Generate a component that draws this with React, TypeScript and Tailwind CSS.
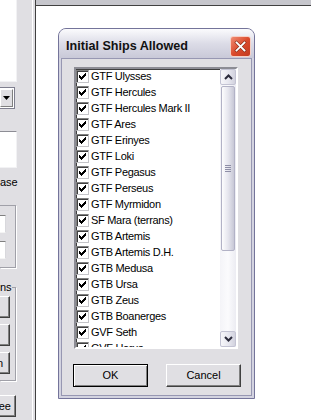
import React from "react";

const items = [
  "GTF Ulysses",
  "GTF Hercules",
  "GTF Hercules Mark II",
  "GTF Ares",
  "GTF Erinyes",
  "GTF Loki",
  "GTF Pegasus",
  "GTF Perseus",
  "GTF Myrmidon",
  "SF Mara (terrans)",
  "GTB Artemis",
  "GTB Artemis D.H.",
  "GTB Medusa",
  "GTB Ursa",
  "GTB Zeus",
  "GTB Boanerges",
  "GVF Seth",
  "GVF Horus",
];

const checkCols: [number, number][] = [
  [3, 5],
  [4, 6],
  [5, 7],
  [6, 6],
  [7, 5],
  [8, 4],
  [9, 3],
];

function CheckBox() {
  return (
    <div className="relative w-[13px] h-[13px] shrink-0 bg-white border border-t-[#808080] border-l-[#808080] border-r-[#c4c4c8] border-b-[#c4c4c8] shadow-[inset_1px_1px_0_#404040]">
      <svg
        width="13"
        height="13"
        viewBox="0 0 13 13"
        className="absolute -left-px -top-px"
        shapeRendering="crispEdges"
      >
        {checkCols.map(([x, y]) => (
          <rect key={x} x={x} y={y} width="1" height="3" fill="#000" />
        ))}
      </svg>
    </div>
  );
}

function Chevron({ up }: { up: boolean }) {
  return (
    <svg width="9" height="6" viewBox="0 0 9 6">
      <polyline
        points={up ? "1,5 4.5,1.5 8,5" : "1,1 4.5,4.5 8,1"}
        fill="none"
        stroke="#2b2b3b"
        strokeWidth="2"
      />
    </svg>
  );
}

function ScrollButton({ up }: { up: boolean }) {
  return (
    <div className="h-[16px] w-[16px] flex items-center justify-center rounded-[2px] border border-[#c3c3d3] bg-gradient-to-r from-[#f7f7fa] via-[#e8e8f0] to-[#d2d2de]">
      <Chevron up={up} />
    </div>
  );
}

function LeftPanel() {
  const raised =
    "bg-[#e0dfe3] border border-t-white border-l-white border-r-[#404040] border-b-[#404040] shadow-[inset_-1px_-1px_0_#808080]";
  return (
    <div className="w-[32px] h-full bg-[#e0dfe3] flex flex-col overflow-hidden shrink-0 text-[11px] leading-[13px] text-black">
      <div className="w-[17px] h-[82px] bg-white border-r border-b border-[#f2f2f4]" />
      <div className="mt-[5px] w-[15px] h-[22px] bg-white border border-l-0 border-[#7f7f8f] py-px pr-px">
        <div className="w-full h-full bg-[#e0dfe3] border border-t-white border-l-white border-r-[#808080] border-b-[#808080] flex items-center justify-center">
          <svg width="7" height="4" viewBox="0 0 7 4">
            <polygon points="0,0 7,0 3.5,4" fill="#000" />
          </svg>
        </div>
      </div>
      <div className="mt-[22px] w-[17px] h-[37px] bg-white border-t border-r border-t-[#8d8d95] border-r-[#f2f2f4] border-b border-b-[#f2f2f4]" />
      <div className="mt-[8px] h-[13px] w-[32px] text-right pr-[19px]">ase</div>
      <div className="mt-[16px] w-[16px] h-[63px] border border-l-0 border-[#a0a0a8] shadow-[1px_1px_0_#ffffff] flex flex-col">
        <div className="mt-[9px] w-[6px] h-[18px] bg-white border border-l-0 border-t-[#808080] border-r-[#d8d8dc] border-b-[#f4f4f4]" />
        <div className="mt-[8px] w-[6px] h-[18px] bg-white border border-l-0 border-t-[#808080] border-r-[#d8d8dc] border-b-[#f4f4f4]" />
      </div>
      <div className="mt-[19px] w-[16px] h-[94px] border border-l-0 border-[#a0a0a8] shadow-[1px_1px_0_#ffffff] flex flex-col">
        <div className="-mt-[7px] h-[13px] w-[12px] bg-[#e0dfe3] text-right pr-[2px]">ns</div>
        <div className={`mt-[2px] w-[10px] h-[22px] border-l-0 ${raised}`} />
        <div className={`mt-[6px] w-[10px] h-[22px] border-l-0 ${raised}`} />
        <div className={`mt-[6px] w-[10px] h-[22px] border-l-0 ${raised} flex items-center justify-end pr-[6px]`}>
          n
        </div>
      </div>
      <div className={`mt-[14px] w-[16px] h-[22px] border-l-0 ${raised} flex items-center justify-end pr-[4px]`}>
        ee
      </div>
    </div>
  );
}

function Dialog() {
  return (
    <div className="absolute left-[58px] top-[28px] w-[197px] h-[371px] rounded-t-[8px] border border-[#74749a] bg-[#d3d3e0] flex flex-col overflow-hidden">
      <div className="h-[29px] shrink-0 flex items-center pt-[5px] pl-[7px] pr-[3px] bg-gradient-to-b from-[#fbfbfd] via-[#dcdce7] to-[#c9c9d8]">
        <span className="font-['Liberation_Sans',Arial,sans-serif] font-bold text-[12.6px] leading-[14px] text-[#111]">
          Initial Ships Allowed
        </span>
        <div className="ml-auto w-[21px] h-[21px] rounded-[3px] border border-[#f6d0c6] bg-gradient-to-br from-[#ef8b72] via-[#db4a2c] to-[#c23a1f] flex items-center justify-center">
          <svg width="13" height="13" viewBox="0 0 13 13">
            <path d="M2.5 2.5 L10.5 10.5 M10.5 2.5 L2.5 10.5" stroke="#7a2a18" strokeWidth="3" strokeLinecap="square" />
            <path d="M2.5 2.5 L10.5 10.5 M10.5 2.5 L2.5 10.5" stroke="#ffffff" strokeWidth="1.8" strokeLinecap="square" />
          </svg>
        </div>
      </div>
      <div className="flex-1 flex flex-col px-[2px] pb-[2px]">
        <div className="flex-1 flex flex-col border border-[#9797b2] bg-[#e0dfe3]">
          <div className="mt-[8px] ml-[12px] w-[164px] h-[282px] border-2 border-t-[#8c8c94] border-l-[#8c8c94] border-r-[#ffffff] border-b-[#ffffff] shadow-[inset_1px_1px_0_#404040] bg-white flex overflow-hidden">
            <div className="flex-1 overflow-hidden flex flex-col">
              {items.map((name) => (
                <div key={name} className="h-[16px] shrink-0 flex items-start pt-px">
                  <CheckBox />
                  <span className="ml-[2px] text-[11px] leading-[13px] tracking-[-0.3px] text-black whitespace-nowrap">
                    {name}
                  </span>
                </div>
              ))}
            </div>
            <div className="w-[16px] shrink-0 flex flex-col bg-gradient-to-r from-[#f4f4f8] via-[#fbfbfd] to-[#ececf2]">
              <ScrollButton up />
              <div className="mt-px mx-px h-[165px] rounded-[2px] border border-[#b2b2c6] bg-gradient-to-r from-[#fdfdfe] via-[#e6e6ee] to-[#c8c8d6] flex flex-col items-center justify-center gap-px">
                <div className="w-[6px] h-px bg-[#8e8ea6]" />
                <div className="w-[6px] h-px bg-[#8e8ea6]" />
                <div className="w-[6px] h-px bg-[#8e8ea6]" />
                <div className="w-[6px] h-px bg-[#8e8ea6]" />
              </div>
              <div className="flex-1" />
              <ScrollButton up={false} />
            </div>
          </div>
          <div className="mt-[15px] ml-[11px] flex gap-[18px] text-[11px] leading-[13px] text-black">
            <div className="w-[75px] h-[23px] border border-black bg-[#e0dfe3] shadow-[inset_1px_1px_0_#ffffff,inset_-1px_-1px_0_#808080] flex items-center justify-center">
              OK
            </div>
            <div className="w-[75px] h-[23px] border border-t-white border-l-white border-r-[#404040] border-b-[#404040] bg-[#e0dfe3] shadow-[inset_-1px_-1px_0_#808080] flex items-center justify-center">
              Cancel
            </div>
          </div>
        </div>
      </div>
    </div>
  );
}

export default function App() {
  return (
    <div className="relative w-[311px] h-[420px] overflow-hidden flex bg-white font-['Liberation_Sans',Arial,sans-serif]">
      <LeftPanel />
      <div className="w-px h-full bg-white shrink-0" />
      <div className="w-[2px] h-full bg-[#e0dfe3] shrink-0" />
      <div className="w-px h-full bg-[#404040] shrink-0" />
      <div className="flex-1 flex flex-col">
        <div className="h-[5px] bg-[#c6c6cc]" />
        <div className="h-px bg-[#404040]" />
        <div className="flex-1 bg-white" />
      </div>
      <Dialog />
    </div>
  );
}
